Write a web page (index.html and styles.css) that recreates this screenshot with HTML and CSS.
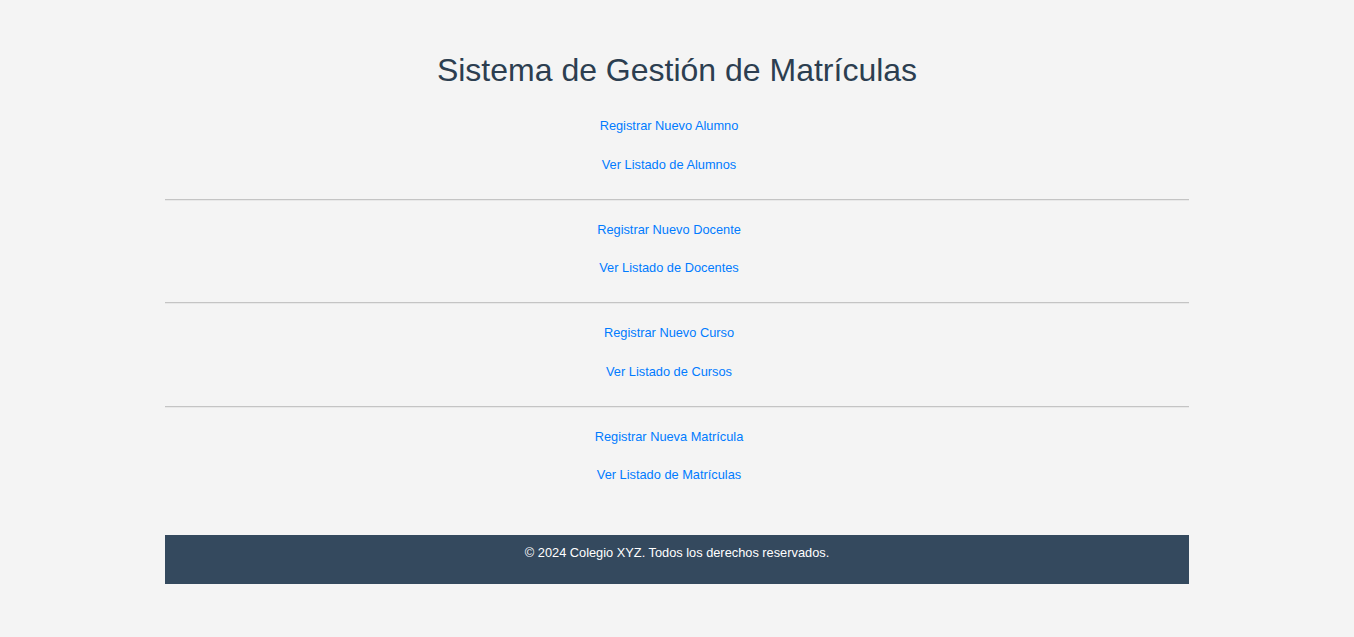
FILE: index.html
```html
<!DOCTYPE html>
<html lang="es">
<head>
<meta charset="utf-8">
<title>Sistema de Gestión de Matrículas</title>
<link rel="stylesheet" href="styles.css">
</head>
<body>
<div class="container">
  <h1 class="title">Sistema de Gestión de Matrículas</h1>
  <nav class="menu">
    <ul class="group">
      <li class="item"><a class="link" href="#">Registrar Nuevo Alumno</a></li>
      <li class="item"><a class="link" href="#">Ver Listado de Alumnos</a></li>
    </ul>
    <hr class="sep">
    <ul class="group">
      <li class="item"><a class="link" href="#">Registrar Nuevo Docente</a></li>
      <li class="item"><a class="link" href="#">Ver Listado de Docentes</a></li>
    </ul>
    <hr class="sep">
    <ul class="group">
      <li class="item"><a class="link" href="#">Registrar Nuevo Curso</a></li>
      <li class="item"><a class="link" href="#">Ver Listado de Cursos</a></li>
    </ul>
    <hr class="sep">
    <ul class="group">
      <li class="item"><a class="link" href="#">Registrar Nueva Matrícula</a></li>
      <li class="item"><a class="link" href="#">Ver Listado de Matrículas</a></li>
    </ul>
  </nav>
  <footer class="footer">
    <p class="footer-text">© 2024 Colegio XYZ. Todos los derechos reservados.</p>
  </footer>
</div>
</body>
</html>
```
FILE: styles.css
```css
html, body {
  margin: 0;
  padding: 0;
}
body {
  background: #f4f4f4;
  font-family: "Liberation Sans", Arial, sans-serif;
  font-size: 12.8px;
}
.container {
  width: 1024px;
  margin: 0 auto;
  padding-top: 52px;
}
.title {
  margin: 0;
  font-size: 32px;
  line-height: 37px;
  font-weight: normal;
  color: #2c3e50;
  text-align: center;
}
.menu {
  margin-top: 18px;
}
.group {
  list-style: none;
  margin: 0;
  padding: 0;
}
.item {
  text-align: center;
  padding: 11.25px 16px 11.25px 0;
  line-height: 16px;
}
.link {
  color: #007bff;
  text-decoration: none;
}
.sep {
  margin: 14.5px 0 10px;
  height: 0;
  border: 0;
  border-top: 1px solid #c4c4c4;
  border-bottom: 1px solid #e8e8e8;
}
.footer {
  margin-top: 40px;
  background: #34495e;
  height: 49px;
  box-sizing: border-box;
  padding-top: 10px;
}
.footer-text {
  margin: 0;
  color: #ffffff;
  text-align: center;
  line-height: 15px;
}
```
